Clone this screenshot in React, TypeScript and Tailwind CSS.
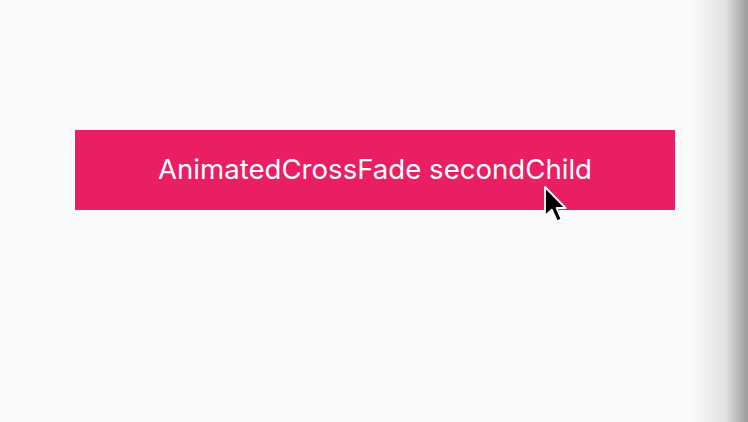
export default function App() {
  return (
    <div className="relative h-[422px] w-[748px] overflow-hidden bg-[#fafafa]">
      <div className="pl-[75px] pt-[130px]">
        <div className="relative flex h-[80px] w-[600px] items-center justify-center bg-[#e91e63]">
          <span
            className="text-[27.6px] text-white"
            style={{ fontFamily: "Inter, 'Noto Sans', sans-serif" }}
          >
            AnimatedCrossFade secondChild
          </span>
          {/* mouse cursor */}
          <svg
            className="absolute left-[468px] top-[56px]"
            width="26"
            height="40"
            viewBox="0 0 26 40"
          >
            <path
              d="M2 1 L2 30 L8.8 23.6 L14 35.4 L18.6 33.4 L13.6 22 L22.6 22 Z"
              fill="#000"
              stroke="#fff"
              strokeWidth="1.8"
              strokeLinejoin="round"
            />
          </svg>
        </div>
      </div>
      {/* window edge shadow */}
      <div className="pointer-events-none absolute inset-y-0 right-0 w-[56px] bg-gradient-to-r from-transparent via-[#e2e2e2] via-60% to-[#9a9a9a]" />
    </div>
  );
}
